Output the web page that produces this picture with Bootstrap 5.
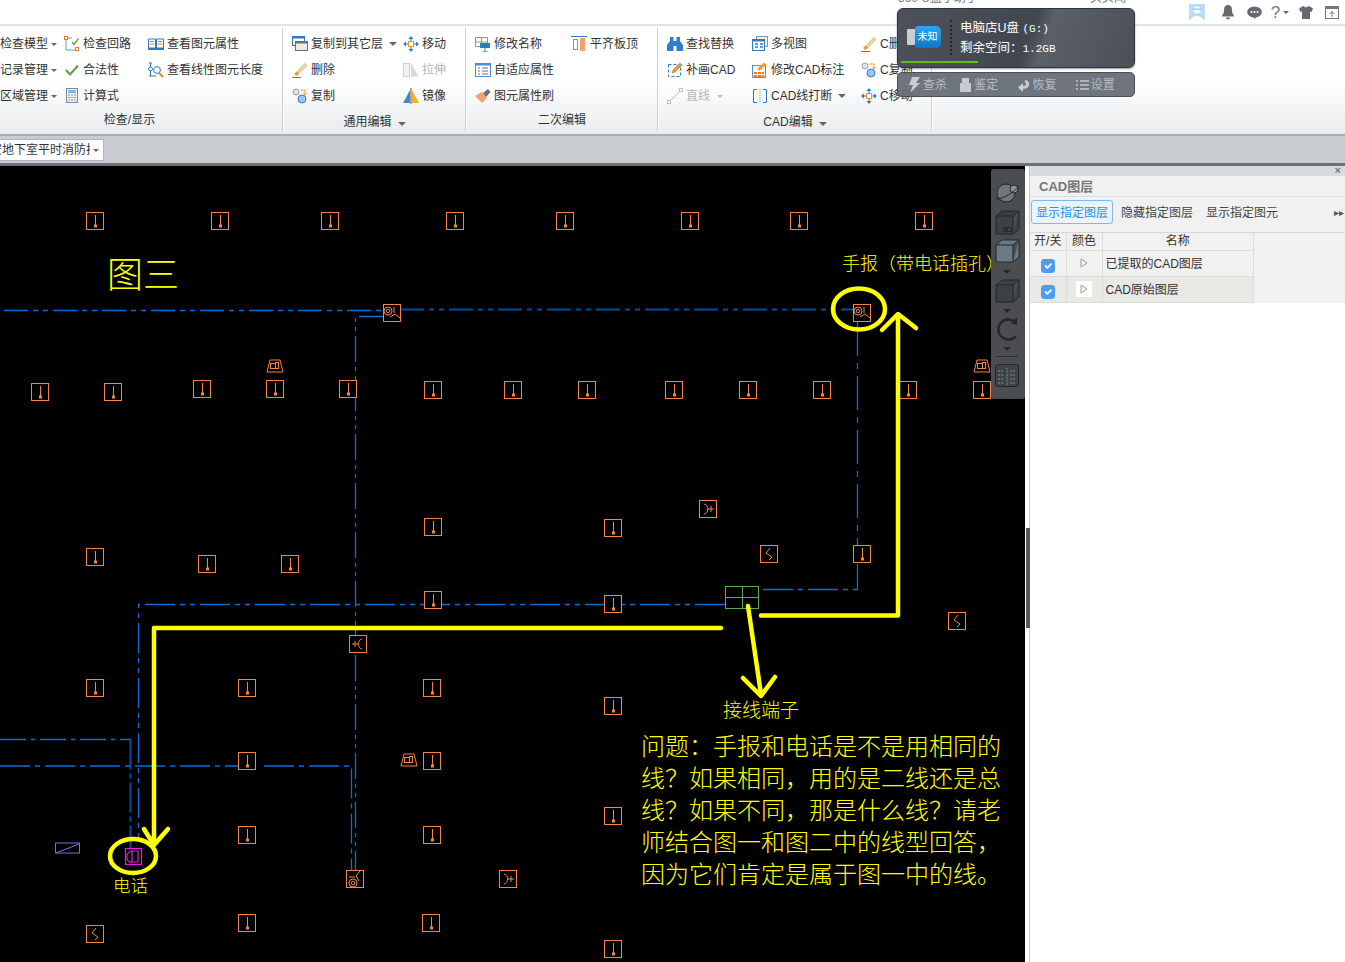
<!DOCTYPE html>
<html lang="zh-CN">
<head>
  <meta charset="UTF-8" />
  <meta name="viewport" content="width=device-width, initial-scale=1" />
  <title>CAD图层</title>
  <link href="https://cdn.jsdelivr.net/npm/bootstrap@5.3.0/dist/css/bootstrap.min.css" rel="stylesheet" />
  <style>
    html, body {
      height: 100%;
      margin: 0;
      overflow: hidden;
      background: #fff;
      font-family: "Liberation Sans", "Noto Sans CJK SC", sans-serif;
      font-size: 12px;
      color: #333;
    }
    /* top strip */
    .top-strip { height: 26px; border-bottom: 2px solid #e2e3e5; }
    .top-slot { width: 26px; height: 24px; }
    .top-avatar { margin-right: 5px; margin-left: -5px; }
    .top-help { font-size: 17px; line-height: 17px; color: #777; }

    /* ribbon */
    .rb { height: 110px; background: linear-gradient(#fff 50%, #e9ecee 100%); border-bottom: 2px solid #a9acb0; }
    .rb-group { position: relative; height: 106px; flex: none; }
    .rb-group::after { content: ""; position: absolute; right: 0; top: 2px; bottom: 1px; width: 1px; background: #ccd0d3; box-shadow: 1px 0 0 #fff; }
    .g-check { width: 283px; }
    .g-common { width: 183px; padding-left: 9px; }
    .g-second { width: 192px; padding-left: 9px; }
    .g-cad { width: 274px; padding-left: 9px; }
    .rb-rows { padding-top: 5px; height: 83px; }
    .rb-item { height: 26px; white-space: nowrap; }
    .rb-item svg { width: 16px; height: 16px; margin-right: 3px; flex: none; }
    .rb-off { color: #b5b7b9; }
    .rb-label { text-align: center; line-height: 16px; color: #333; padding-top: 3px; margin-left: -9px; }
    .rb-label-first { margin-left: 0; padding-right: 24px; }
    .rb-label-low { padding-top: 5px; }
    .w-c1 { width: 64px; }
    .w-c2 { width: 84px; }
    .w-c3 { width: 111px; }
    .w-c4 { width: 96px; }
    .w-c5 { width: 85px; }
    .w-c6 { width: 109px; }
    .caret-dn { display: inline-block; width: 0; height: 0; border: 3px solid transparent; border-top: 3px solid #666; border-bottom: 0; margin-left: 3px; }
    .caret-off { border-top-color: #bbb; margin-left: 7px; }
    .caret-wide { margin-left: 6px; border-width: 4px; border-bottom: 0; }

    /* tab strip */
    .tab-strip { height: 30px; background: #c9ccd0; border-bottom: 3px solid #6d6f72; padding-top: 3px; }
    .doc-tab { width: 104px; height: 22px; background: #fff; border: 1px solid #b3b5b8; border-left: 0; }
    .doc-tab-text { width: 90px; overflow: hidden; white-space: nowrap; }
    .doc-tab-text span { margin-left: -10px; }

    /* canvas and panel */
    .work { height: 796px; }
    .cad-view { width: 1025px; flex: none; background: #000; }
    .cad-view svg { display: block; }
    .cad-txt { fill: #ff0; font-family: "Noto Sans CJK SC", sans-serif; font-weight: 300; }
    .split { position: relative; width: 5px; flex: none; background: #fff; border-right: 1px solid #c8c8c8; }
    .split-grip { position: absolute; left: 1px; top: 362px; width: 4px; height: 100px; background: #55585c; }
    .layer-panel { flex: 1 1 auto; min-width: 0; background: #fff; }
    .lp-bar { height: 10px; background: #d9dbde; line-height: 8px; color: #777; text-align: right; padding-right: 4px; font-size: 11px; font-weight: 700; }
    .lp-title { height: 21px; background: #f1f1f1; border-bottom: 1px solid #dcdcdc; font-size: 13px; font-weight: 700; color: #777; padding-left: 9px; line-height: 21px; }
    .lp-tabs { height: 36px; background: #f1f1f1; border-bottom: 1px solid #d7d7d7; padding: 3px 0 0 1px; }
    .lp-tabs .btn { font-size: 12px; line-height: 14px; padding: 5px 4px 3px; border-radius: 3px; color: #444; border: 1px solid transparent; }
    .lp-tabs .btn + .btn { margin-left: 3px; }
    .lp-tabs .lp-on { color: #2c8fe6; background: #e9f4fe; border-color: #7cb9f2; }
    .lp-next { margin-left: auto; color: #555; font-size: 10px; padding: 5px 1px 0 0; }
    .lp-head { background: #f1f1f1; }
    .lp-table { width: 224px; margin: 0; font-size: 12px; color: #333; border-color: #dcdcdc; table-layout: fixed; }
    .lp-table th, .lp-table td { padding: 0; text-align: center; vertical-align: middle; font-weight: 400; border: 1px solid #dcdcdc; background: transparent; color: #333; box-shadow: none; }
    .lp-table th { height: 17px; line-height: 15px; border-top: 0; padding-top: 1px; }
    .lp-table td { height: 26px; }
    .lp-table td:first-child, .lp-table th:first-child { border-left: 0; }
    .lp-table .lp-name { text-align: left; padding: 1px 0 0 3px; }
    .lp-table .lp-alt td { background: #e8e8e4; }
    .lp-narrow { width: 36px; }
    .lp-check { width: 14px; height: 14px; margin: 6px 0 0; border-radius: 2px; background-color: #4c9df0; border-color: #4c9df0; }
    .lp-check:checked { background-color: #4c9df0; border-color: #4c9df0; }
    .swatch { width: 16px; height: 16px; }
    .swatch-on { background: #fff; }

    /* usb popup, lies over the ribbon */
    .usb-pop { position: absolute; left: 897px; top: 8px; width: 238px; color: #fff; z-index: 5; }
    .usb-main { position: relative; height: 60px; border: 1px solid #30343a; border-radius: 6px; background: linear-gradient(110deg, #4d525a 0%, #42474f 55%, #5b6068 62%, #4b5058 100%); box-shadow: 0 1px 2px rgba(0,0,0,.4); }
    .usb-badge { width: 27px; height: 22px; margin: 17px 0 0 16px; border-radius: 5px; background: linear-gradient(#2fa6ea, #0a78c6); font-size: 10px; line-height: 22px; text-align: center; flex: none; }
    .usb-plug { position: absolute; left: 9px; top: 20px; width: 8px; height: 16px; background: #c9ccd0; border-radius: 1px; }
    .usb-dots { width: 2px; height: 35px; margin: 11px 0 0 9px; border-left: 2px dotted #22252a; flex: none; }
    .usb-info { margin: 9px 0 0 8px; font-size: 12.5px; white-space: nowrap; }
    .usb-info div { height: 20px; line-height: 20px; }
    .usb-mono { font-family: "Liberation Mono", monospace; font-size: 11px; }
    .usb-prog { position: absolute; left: 3px; bottom: 4px; width: 77px; height: 2px; background: #5cc400; }
    .usb-acts { height: 25px; margin-top: 4px; border: 1px solid #4a4e55; border-radius: 5px; background: rgba(100,106,116,.93); color: #b9bdc3; font-size: 12px; padding-left: 10px; }
    .usb-act { width: 59px; }
    .usb-act:first-child { width: 52px; }
    .usb-act svg { width: 13px; height: 16px; margin-right: 2px; }
    .usb-peek { position: absolute; top: -11px; font-size: 12px; color: #777; white-space: nowrap; z-index: 1; }
    .peek-a { left: 898px; }
    .peek-b { left: 1090px; }
  </style>
</head>
<body>

  <svg width="0" height="0" class="position-absolute">
    <symbol id="ic-brush" viewBox="0 0 16 16">
      <path d="M2 12 L5 9 L7.5 11.5 L4.5 14 Z" fill="#f09a28"/>
      <path d="M6 8.5 L13 1.5 L15 3.5 L8 10.5 Z" fill="#e9d9a8" stroke="#b49a5a" stroke-width=".6"/>
      <path d="M0 15.5 H9" stroke="#3a7fd0" stroke-width="1"/>
    </symbol>
    <symbol id="ic-copy" viewBox="0 0 16 16">
      <circle cx="4" cy="4" r="3" fill="#dfe3e8" stroke="#9aa0a8"/>
      <circle cx="10" cy="11" r="4" fill="#9cc4ec" stroke="#3a80c8"/>
      <path d="M8.5 2 H13 V6 M11.5 5 L13 7 L14.5 5" fill="none" stroke="#f0a020"/>
    </symbol>
    <symbol id="ic-move" viewBox="0 0 16 16">
      <path d="M8 0 L10.5 3 H5.5 Z M8 16 L10.5 13 H5.5 Z M0 8 L3 5.5 V10.5 Z M16 8 L13 5.5 V10.5 Z" fill="#2e78cc"/>
      <path d="M8 3 V5 M8 11 V13 M3 8 H5 M11 8 H13" stroke="#2e78cc"/>
      <rect x="5.5" y="5.5" width="5" height="5" fill="#fff" stroke="#f09020"/>
    </symbol>
  </svg>

  <div class="usb-peek peek-a">360 U盘小助手</div>
  <div class="usb-peek peek-b">头头闻</div>

  <!-- top strip -->
  <div class="top-strip d-flex justify-content-end pe-0">
    <div class="top-slot top-avatar d-flex justify-content-center align-items-center">
      <svg width="16" height="16" viewBox="0 0 16 16"><rect width="16" height="16" fill="#bcdcf6"/><circle cx="8" cy="6" r="3.6" fill="#fff"/><path d="M2 16 C2 11 14 11 14 16 Z" fill="#fff"/><path d="M3.6 4.6 H12.4 V5.6 H3.6 Z" fill="#6fb4e8"/></svg>
    </div>
    <div class="top-slot d-flex justify-content-center align-items-center">
      <svg width="14" height="15" viewBox="0 0 14 15"><path d="M7 0 C4 0 3 2.5 3 5 C3 8 2 9.5 1 10.5 V11.5 H13 V10.5 C12 9.5 11 8 11 5 C11 2.5 10 0 7 0 Z M5 12.5 H9 C9 15 5 15 5 12.5 Z" fill="#666a70"/></svg>
    </div>
    <div class="top-slot d-flex justify-content-center align-items-center">
      <svg width="15" height="13" viewBox="0 0 15 13"><ellipse cx="7.5" cy="6" rx="7.3" ry="5.6" fill="#666a70"/><path d="M5 10 L8 13 L9 10 Z" fill="#666a70"/><circle cx="4.5" cy="6" r="1" fill="#fff"/><circle cx="7.5" cy="6" r="1" fill="#fff"/><circle cx="10.5" cy="6" r="1" fill="#fff"/></svg>
    </div>
    <div class="top-slot d-flex justify-content-center align-items-center">
      <span class="top-help">?</span><span class="caret-dn"></span>
    </div>
    <div class="top-slot d-flex justify-content-center align-items-center">
      <svg width="14" height="13" viewBox="0 0 14 13"><path d="M4 0 L7 1.5 L10 0 L14 2.5 L12.5 6 L11 5.5 V13 H3 V5.5 L1.5 6 L0 2.5 Z" fill="#666a70"/></svg>
    </div>
    <div class="top-slot d-flex justify-content-center align-items-center">
      <svg width="14" height="13" viewBox="0 0 14 13"><rect x=".5" y=".5" width="13" height="12" fill="#fff" stroke="#777"/><rect x="1" y="1" width="12" height="2" fill="#777"/><path d="M7 11 V5.5 M4.5 8 L7 5.5 L9.5 8" fill="none" stroke="#777"/></svg>
    </div>
  </div>

  <!-- ribbon -->
  <div class="rb d-flex">
    <div class="rb-group g-check">
      <div class="rb-rows d-flex">
        <div class="w-c1">
          <div class="rb-item d-flex align-items-center">检查模型<span class="caret-dn"></span></div>
          <div class="rb-item d-flex align-items-center">记录管理<span class="caret-dn"></span></div>
          <div class="rb-item d-flex align-items-center">区域管理<span class="caret-dn"></span></div>
        </div>
        <div class="w-c2">
          <div class="rb-item d-flex align-items-center"><svg viewBox="0 0 16 16"><path d="M2 4 V14 H12 M4 2 H8" fill="none" stroke="#8b929a"/><rect x=".5" y=".5" width="3" height="3" fill="#fff" stroke="#e8791e"/><rect x="11.5" y="11.5" width="3" height="3" fill="#fff" stroke="#e8791e"/><path d="M8 6 L10 8.5 L14.5 2.5" fill="none" stroke="#66a83c" stroke-width="1.4"/></svg>检查回路</div>
          <div class="rb-item d-flex align-items-center"><svg viewBox="0 0 16 16"><path d="M2 8 L6 12.5 L14 3.5" fill="none" stroke="#5fa042" stroke-width="2"/></svg>合法性</div>
          <div class="rb-item d-flex align-items-center"><svg viewBox="0 0 16 16"><rect x="2.5" y=".5" width="11" height="14" fill="#eef1f4" stroke="#7d8a99"/><rect x="4" y="2" width="8" height="3" fill="#8fb4da"/><path d="M4 7 H12 M4 9.5 H12 M4 12 H12" stroke="#8a97a6" stroke-dasharray="2 1"/></svg>计算式</div>
        </div>
        <div>
          <div class="rb-item d-flex align-items-center"><svg viewBox="0 0 16 16"><path d="M.5 3 H7.5 V12 H.5 Z M8.5 3 H15.5 V12 H8.5 Z" fill="#fff" stroke="#2c7ac6"/><path d="M2 5.5 H6 M2 8 H6 M10 5.5 H14 M10 8 H14" stroke="#e8791e"/><path d="M0 13 H16" stroke="#2c7ac6" stroke-width="2"/></svg>查看图元属性</div>
          <div class="rb-item d-flex align-items-center"><svg viewBox="0 0 16 16"><path d="M2.5 1 V14 M1 1 H4 M1 14 H8" fill="none" stroke="#2c7ac6"/><circle cx="2.5" cy="7" r="2" fill="#fff" stroke="#2c7ac6"/><circle cx="9" cy="8" r="3.4" fill="#fff" stroke="#2c7ac6"/><path d="M11 11 L15 15" stroke="#f09020" stroke-width="2.4"/></svg>查看线性图元长度</div>
        </div>
      </div>
      <div class="rb-label rb-label-first">检查/显示</div>
    </div>

    <div class="rb-group g-common">
      <div class="rb-rows d-flex">
        <div class="w-c3">
          <div class="rb-item d-flex align-items-center"><svg viewBox="0 0 16 16"><rect x=".5" y=".5" width="12" height="9" fill="#fff" stroke="#2c7ac6"/><rect x="0" y="0" width="13" height="2.5" fill="#2c7ac6"/><rect x="3.5" y="5.5" width="12" height="9" fill="#e8eaec" stroke="#6c7278"/><rect x="3" y="5" width="13" height="2.5" fill="#6c7278"/></svg>复制到其它层<span class="caret-dn caret-wide"></span></div>
          <div class="rb-item d-flex align-items-center"><svg><use href="#ic-brush"/></svg>删除</div>
          <div class="rb-item d-flex align-items-center"><svg><use href="#ic-copy"/></svg>复制</div>
        </div>
        <div>
          <div class="rb-item d-flex align-items-center"><svg><use href="#ic-move"/></svg>移动</div>
          <div class="rb-item d-flex align-items-center rb-off"><svg viewBox="0 0 16 16"><rect x=".5" y="1.5" width="6" height="13" fill="#f2f2f2" stroke="#d0d0d0"/><path d="M8 1 L15.5 14.5 H8 Z" fill="#d8d8d8"/></svg>拉伸</div>
          <div class="rb-item d-flex align-items-center"><svg viewBox="0 0 16 16"><path d="M7 2 V15 H0 Z" fill="#3f86d8"/><path d="M9 2 V15 H16 Z" fill="#f6b21e"/><path d="M8 0 V16" stroke="#555"/></svg>镜像</div>
        </div>
      </div>
      <div class="rb-label rb-label-low">通用编辑<span class="caret-dn caret-wide"></span></div>
    </div>

    <div class="rb-group g-second">
      <div class="rb-rows d-flex">
        <div class="w-c4">
          <div class="rb-item d-flex align-items-center"><svg viewBox="0 0 16 16"><path d="M.5 1.5 H12.5 V10.5 H.5 Z M6.5 1.5 V10.5 M.5 6 H12.5" fill="#fff" stroke="#8b929a"/><rect x="5" y="7" width="10" height="5" fill="#2c7ac6"/><path d="M10 12 V16 M7 16 H13" stroke="#2c7ac6"/></svg>修改名称</div>
          <div class="rb-item d-flex align-items-center"><svg viewBox="0 0 16 16"><rect x=".5" y="1.5" width="15" height="13" fill="#fff" stroke="#4a8fd8"/><rect x="0" y="1" width="16" height="2.5" fill="#4a8fd8"/><path d="M3 6 H5 M3 9 H5 M3 12 H5 M7 6 H13 M7 9 H13 M7 12 H13" stroke="#6a7480"/></svg>自适应属性</div>
          <div class="rb-item d-flex align-items-center"><svg viewBox="0 0 16 16"><path d="M0 8 L7 4 L12 10 L7 15 Z" fill="#f4a070"/><path d="M8 5 L13 1 L15.5 4 L11 9 Z" fill="#6a6f76"/></svg>图元属性刷</div>
        </div>
        <div>
          <div class="rb-item d-flex align-items-center"><svg viewBox="0 0 16 16"><path d="M0 .5 H16" stroke="#2c7ac6"/><rect x="2.5" y="3.5" width="4" height="10" fill="#fff" stroke="#8b929a"/><rect x="9" y="2" width="5" height="13" fill="#f6a06a"/></svg>平齐板顶</div>
        </div>
      </div>
      <div class="rb-label">二次编辑</div>
    </div>

    <div class="rb-group g-cad">
      <div class="rb-rows d-flex">
        <div class="w-c5">
          <div class="rb-item d-flex align-items-center"><svg viewBox="0 0 16 16"><path d="M3 1 H6.5 V5 H9.5 V1 H13 V5 L16 9 V15 H9.5 V10 H6.5 V15 H0 V9 L3 5 Z" fill="#2f7fd0"/></svg>查找替换</div>
          <div class="rb-item d-flex align-items-center"><svg viewBox="0 0 16 16"><rect x="1.5" y="2.5" width="12" height="12" fill="none" stroke="#2c7ac6" stroke-dasharray="3 2"/><path d="M5 11 L6 8 L13 1 L15 3 L8 10 Z" fill="#f09a28" stroke="#8a6a30" stroke-width=".5"/></svg>补画CAD</div>
          <div class="rb-item d-flex align-items-center rb-off"><svg viewBox="0 0 16 16"><path d="M2 14 L14 2" stroke="#c9c9c9"/><rect x=".5" y="12.5" width="3" height="3" fill="#fff" stroke="#c0c0c0"/><rect x="12.5" y=".5" width="3" height="3" fill="#fff" stroke="#c0c0c0"/></svg>直线<span class="caret-dn caret-off"></span></div>
        </div>
        <div class="w-c6">
          <div class="rb-item d-flex align-items-center"><svg viewBox="0 0 16 16"><rect x="4.5" y=".5" width="11" height="10" fill="#eee" stroke="#8b929a"/><rect x=".5" y="3.5" width="12" height="11" fill="#fff" stroke="#2c7ac6"/><rect x="0" y="3" width="13" height="2.5" fill="#2c7ac6"/><path d="M3 8 H6 M3 11 H6 M8 8 H11 M8 11 H11" stroke="#2c7ac6" stroke-width="1.4"/></svg>多视图</div>
          <div class="rb-item d-flex align-items-center"><svg viewBox="0 0 16 16"><rect x=".5" y="3.5" width="13" height="12" fill="#fff" stroke="#4a8fd8"/><path d="M5 7 L12 .5 L14.5 2.5 L7.5 9 Z" fill="#f0a030"/><path d="M2 11 H12 M2 14 H12" stroke="#e8791e" stroke-width="2" stroke-dasharray="3 1"/></svg>修改CAD标注</div>
          <div class="rb-item d-flex align-items-center"><svg viewBox="0 0 16 16"><path d="M5 1.5 H1.5 V14.5 H5 M11 1.5 H14.5 V14.5 H11" fill="none" stroke="#2c7ac6"/><path d="M8 1 V15" stroke="#e8791e" stroke-dasharray="1 1"/></svg>CAD线打断<span class="caret-dn caret-wide"></span></div>
        </div>
        <div>
          <div class="rb-item d-flex align-items-center"><svg><use href="#ic-brush"/></svg>C删除</div>
          <div class="rb-item d-flex align-items-center"><svg><use href="#ic-copy"/></svg>C复制</div>
          <div class="rb-item d-flex align-items-center"><svg><use href="#ic-move"/></svg>C移动</div>
        </div>
      </div>
      <div class="rb-label rb-label-low">CAD编辑<span class="caret-dn caret-wide"></span></div>
    </div>
  </div>

  <!-- tab strip -->
  <div class="tab-strip">
    <div class="doc-tab d-flex align-items-center">
      <div class="doc-tab-text"><span>安地下室平时消防排</span></div>
      <span class="caret-dn"></span>
    </div>
  </div>

  <!-- drawing and layer panel -->
  <div class="work d-flex">
    <div class="cad-view">
      <svg id="cad" width="1025" height="796" viewBox="0 166 1025 796" xmlns="http://www.w3.org/2000/svg">
        <g id="wires" fill="none" stroke="#0a6fd8" stroke-width="1.3">
          <path d="M4 310.5 H385" stroke-dasharray="24 5 5 5 5 5"/>
          <path d="M400 309.5 H853" stroke="#004c9e" stroke-width="2" stroke-dasharray="24 5 5 5 5 5"/>
          <path d="M385 316.5 H355.5 V635" stroke-dasharray="26 5 4 5 4 5"/>
          <path d="M355.5 655 V870" stroke-dasharray="26 5 4 5 4 5"/>
          <path d="M857.5 322 V545" stroke-dasharray="34 7 6 7"/>
          <path d="M857.5 564 V589.5 H759" stroke-dasharray="30 5 5 5"/>
          <path d="M725 604.5 H138.5 V840" stroke-dasharray="30 5 5 5 5 5"/>
          <path d="M0 739.5 H130.5" stroke-dasharray="26 5 4 5"/>
          <path d="M130.5 739.5 V850" stroke="#004c9e" stroke-width="2" stroke-dasharray="30 4 5 4"/>
          <path d="M0 766 H238" stroke-dasharray="30 5 5 5"/>
          <path d="M264 766 H351.5 V872" stroke-dasharray="30 5 5 5"/>
        </g>
        <g id="symbols" fill="none" stroke="#f4854a" stroke-width="1"></g>

        <!-- terminal block -->
        <g fill="none" stroke="#5fa85a">
          <rect x="725.5" y="586.5" width="33" height="22" fill="#000"/>
          <path d="M742.5 586 V608 M725 597.5 H759"/>
        </g>

        <!-- phone -->
        <g fill="none" stroke="#e11be1" stroke-width="1.2">
          <rect x="125.5" y="848.5" width="16" height="16" fill="#000"/>
          <path d="M132 851 C125 853 125 861 132 863 M132 851 H138 V862 H132 Z"/>
        </g>
        <rect x="55.5" y="843" width="24" height="10" fill="none" stroke="#7a6fe0"/>
        <path d="M56 853 L79 844" stroke="#7a6fe0"/>

        <!-- yellow notes -->
        <g fill="none" stroke="#ff0" stroke-width="4.5" stroke-linecap="round" stroke-linejoin="round">
          <path d="M721 628 H154 V842"/>
          <path d="M144 829 L154 845 L168 829"/>
          <path d="M761 615.5 H898 V316" />
          <path d="M882 330 L898 314 L916 328"/>
          <path d="M748 606 L761 694"/>
          <path d="M743 678 L761 696 L775 677"/>
          <ellipse cx="859" cy="309" rx="26" ry="20.5"/>
          <ellipse cx="133" cy="856" rx="23" ry="17"/>
        </g>
        <text class="cad-txt" x="107" y="288" font-size="36">图三</text>
        <text class="cad-txt" x="842" y="270" font-size="18">手报（带电话插孔）</text>
        <text class="cad-txt" x="723" y="717" font-size="19">接线端子</text>
        <text class="cad-txt" x="113" y="892" font-size="17.5">电话</text>
        <g class="cad-txt" font-size="24">
          <text x="641" y="755">问题：手报和电话是不是用相同的</text>
          <text x="641" y="787">线？如果相同，用的是二线还是总</text>
          <text x="641" y="819">线？如果不同，那是什么线？请老</text>
          <text x="641" y="851">师结合图一和图二中的线型回答，</text>
          <text x="641" y="883">因为它们肯定是属于图一中的线。</text>
        </g>

        <!-- view tools -->
        <rect x="991" y="169" width="34" height="230" rx="3" fill="#4b4d51"/>
        <g fill="#3c4148" stroke="#23262a">
          <circle cx="1006" cy="193" r="9" fill="#72767c"/>
          <circle cx="1014" cy="189" r="4" fill="#8c9096"/>
          <path d="M996 199 C1004 199 1014 192 1019 186" fill="none"/>
          <path d="M996 216 H1013 V234 H996 Z M996 216 L1002 211 H1019 L1013 216 M1013 234 L1019 229 V211" />
          <path d="M996 245 H1013 V262 H996 Z M996 245 L1002 240 H1019 L1013 245 M1013 262 L1019 257 V240" fill="#6c7a88"/>
          <path d="M996 285 H1013 V302 H996 Z M996 285 L1002 280 H1019 L1013 285 M1013 302 L1019 297 V280"/>
        </g>
        <text x="1002" y="232" font-size="8" fill="#15171a" font-family="Liberation Sans, sans-serif">3D</text>
        <path d="M1003 270 h8 l-4 4 Z M1003 309 h8 l-4 4 Z M1003 347 h8 l-4 4 Z" fill="#23262a"/>
        <path d="M1015 322 A10 10 0 1 0 1016 336" fill="none" stroke="#23262a" stroke-width="2.4"/>
        <path d="M1011 323 L1017 325 L1017 317 Z" fill="#23262a"/>
        <path d="M996 356.5 H1018" stroke="#2a2c30"/>
        <rect x="995.5" y="364.5" width="23" height="22" rx="2" fill="#3e4349" stroke="#23262a"/>
        <path d="M1007 368 V385 M998 371 h6 M998 375 h6 M998 379 h6 M998 383 h6 M1010 371 h6 M1010 375 h6 M1010 379 h6 M1010 383 h6" stroke="#858b92" stroke-dasharray="2 1"/>
      </svg>
    </div>

    <div class="split"><div class="split-grip"></div></div>

    <div class="layer-panel">
      <div class="lp-bar">×</div>
      <div class="lp-title">CAD图层</div>
      <div class="lp-tabs d-flex align-items-start">
        <button type="button" class="btn lp-on">显示指定图层</button>
        <button type="button" class="btn">隐藏指定图层</button>
        <button type="button" class="btn">显示指定图元</button>
        <span class="lp-next">▸▸</span>
      </div>
      <div class="lp-head">
        <table class="table lp-table">
          <colgroup><col class="lp-narrow"><col class="lp-narrow"><col></colgroup>
          <thead>
            <tr><th>开/关</th><th>颜色</th><th>名称</th></tr>
          </thead>
          <tbody id="layerRows"></tbody>
        </table>
      </div>
    </div>
  </div>

  <!-- usb helper popup -->
  <div class="usb-pop">
    <div class="usb-main d-flex">
      <div class="usb-plug"></div>
      <div class="usb-badge">未知</div>
      <div class="usb-dots"></div>
      <div class="usb-info">
        <div>电脑店U盘 <span class="usb-mono">(G:)</span></div>
        <div>剩余空间：<span class="usb-mono">1.2GB</span></div>
      </div>
      <div class="usb-prog"></div>
    </div>
    <div class="usb-acts d-flex align-items-center">
      <div class="usb-act d-flex align-items-center"><svg viewBox="0 0 13 16"><path d="M4 0 H12 L8 6 H12 L2 16 L5 8 H1 Z" fill="#c8ccd1"/></svg>查杀</div>
      <div class="usb-act d-flex align-items-center"><svg viewBox="0 0 13 16"><path d="M3 1 H10 V6 H12 V15 H1 V6 H3 Z" fill="#c8ccd1"/></svg>鉴定</div>
      <div class="usb-act d-flex align-items-center"><svg viewBox="0 0 13 16"><path d="M7 3 C13 3 13 12 5 12 V15 L0 10.5 L5 6 V9 C9 9 9 6 7 6 Z" fill="#c8ccd1"/></svg>恢复</div>
      <div class="usb-act d-flex align-items-center"><svg viewBox="0 0 13 16"><path d="M0 3 H2 V5 H0 Z M4 3 H13 V5 H4 Z M0 7 H2 V9 H0 Z M4 7 H13 V9 H4 Z M0 11 H2 V13 H0 Z M4 11 H13 V13 H4 Z" fill="#aeb3b9"/></svg>设置</div>
    </div>
  </div>

  <script>
    // device symbols, centre x / y in page pixels
    const sockets = [
      [95,221],[220,221],[330,221],[455,221],[565,221],[690,221],[799,221],[924,221],
      [40,392],[113,392],[202,389],[275,389],[348,389],[433,390],[513,390],[587,390],
      [674,390],[748,390],[822,390],[908,390],[982,390],
      [433,527],[613,528],[95,557],[207,564],[290,564],[862,554],[433,600],[613,604],
      [95,688],[247,688],[432,688],[613,706],[247,761],[432,761],[613,816],[247,835],
      [432,835],[247,923],[431,923],[613,949]
    ];
    const zigzags = [[769,554],[957,621],[95,934]];
    const jacks = [[708,509,1],[508,879,1],[358,644,-1]];
    const reporters = [[392,313,0],[862,313,0],[355,879,-90]];
    const speakers = [[275,366],[982,366],[409,760]];

    function box(x, y) {
      return `<rect x="${x - 8.5}" y="${y - 8.5}" width="17" height="17" fill="#000"/>`;
    }

    let out = "";
    sockets.forEach(([x, y]) => {
      out += box(x, y) + `<path d="M${x + .5} ${y - 6} V${y + 5}"/><rect x="${x - 1}" y="${y + 3.5}" width="3" height="3" fill="#f4854a" stroke="none"/>`;
    });
    zigzags.forEach(([x, y]) => {
      out += box(x, y) + `<path d="M${x + 1} ${y - 6} L${x - 3} ${y - 1} L${x + 3} ${y + 3} L${x} ${y + 6}"/>`;
    });
    jacks.forEach(([x, y, d]) => {
      out += box(x, y) + `<path d="M${x - 4 * d} ${y - 5} C${x + 1 * d} ${y - 4} ${x + 1 * d} ${y + 4} ${x - 4 * d} ${y + 5} M${x} ${y} H${x + 6 * d} M${x + 3 * d} ${y - 3} V${y + 3}"/>`;
    });
    reporters.forEach(([x, y, r]) => {
      out += box(x, y) + `<g transform="rotate(${r} ${x} ${y})"><circle cx="${x - 4}" cy="${y - 2}" r="4"/><circle cx="${x - 4}" cy="${y - 2}" r="1.8"/><path d="M${x + 2} ${y - 6} V${y} M${x - 2} ${y + 4} L${x + 3} ${y + 1} L${x + 8} ${y + 5}"/></g>`;
    });
    speakers.forEach(([x, y]) => {
      out += `<path d="M${x - 5} ${y - 6} H${x + 5} L${x + 8} ${y + 6} H${x - 8} Z"/><rect x="${x - 4.5}" y="${y - 2.5}" width="5" height="5"/><rect x="${x + .5}" y="${y - 3.5}" width="3" height="6"/>`;
    });
    document.getElementById("symbols").innerHTML = out;

    const layers = [
      { name: "已提取的CAD图层", alt: false },
      { name: "CAD原始图层", alt: true }
    ];
    document.getElementById("layerRows").innerHTML = layers.map(l => `
      <tr class="${l.alt ? "lp-alt" : ""}">
        <td><input class="form-check-input lp-check" type="checkbox" checked></td>
        <td><div class="swatch mx-auto d-flex align-items-center justify-content-center ${l.alt ? "swatch-on" : ""}">
          <svg width="8" height="10" viewBox="0 0 8 10"><path d="M1 1 L7 5 L1 9 Z" fill="#fff" stroke="#9a9a9a"/></svg></div></td>
        <td class="lp-name">${l.name}</td>
      </tr>`).join("");
  </script>

  <script src="https://cdn.jsdelivr.net/npm/bootstrap@5.3.0/dist/js/bootstrap.bundle.min.js"></script>
</body>
</html>
